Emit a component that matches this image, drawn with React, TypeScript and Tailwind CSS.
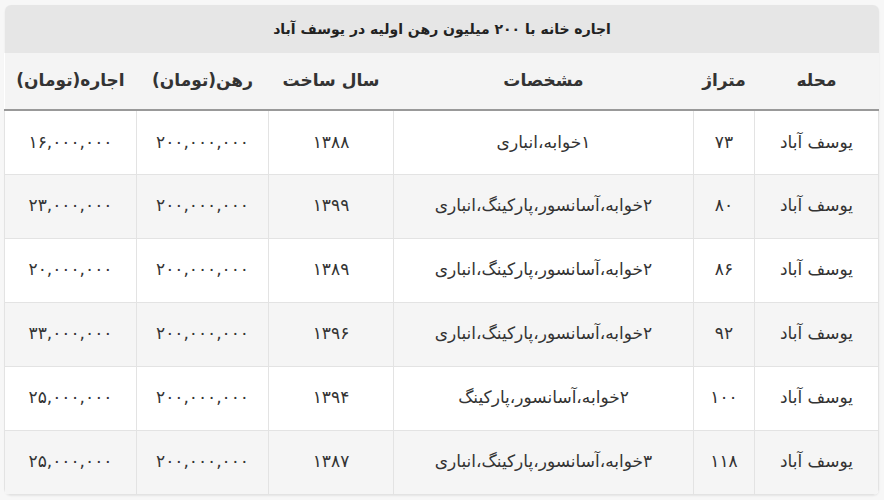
const rows = [
  ["یوسف آباد", "۷۳", "۱خوابه،انباری", "۱۳۸۸", "۲۰۰,۰۰۰,۰۰۰", "۱۶,۰۰۰,۰۰۰"],
  ["یوسف آباد", "۸۰", "۲خوابه،آسانسور،پارکینگ،انباری", "۱۳۹۹", "۲۰۰,۰۰۰,۰۰۰", "۲۳,۰۰۰,۰۰۰"],
  ["یوسف آباد", "۸۶", "۲خوابه،آسانسور،پارکینگ،انباری", "۱۳۸۹", "۲۰۰,۰۰۰,۰۰۰", "۲۰,۰۰۰,۰۰۰"],
  ["یوسف آباد", "۹۲", "۲خوابه،آسانسور،پارکینگ،انباری", "۱۳۹۶", "۲۰۰,۰۰۰,۰۰۰", "۳۳,۰۰۰,۰۰۰"],
  ["یوسف آباد", "۱۰۰", "۲خوابه،آسانسور،پارکینگ", "۱۳۹۴", "۲۰۰,۰۰۰,۰۰۰", "۲۵,۰۰۰,۰۰۰"],
  ["یوسف آباد", "۱۱۸", "۳خوابه،آسانسور،پارکینگ،انباری", "۱۳۸۷", "۲۰۰,۰۰۰,۰۰۰", "۲۵,۰۰۰,۰۰۰"],
];

const headers = ["محله", "متراژ", "مشخصات", "سال ساخت", "رهن(تومان)", "اجاره(تومان)"];
const widths = ["w-[124px]", "w-[61px]", "w-[300px]", "w-[125px]", "w-[132px]", "w-[132px]"];

export default function App() {
  return (
    <div
      dir="rtl"
      className="min-h-[500px] bg-[#f7f7f7] pt-[5px] pr-[5px] text-[#333]"
      style={{ fontFamily: '"DejaVu Sans", "Noto Sans", sans-serif' }}
    >
      <div className="w-[874px] rounded-md shadow-[0_1px_2px_rgba(0,0,0,0.08)]">
        <div className="flex h-[48px] items-center justify-center rounded-t-md bg-[#e6e6e6] text-[14px] font-bold text-[#222]">
          اجاره خانه با ۲۰۰ میلیون رهن اولیه در یوسف آباد
        </div>
        <table className="w-full table-fixed border-collapse overflow-hidden rounded-b-md bg-white">
          <colgroup>
            {widths.map((w, i) => (
              <col key={i} className={w} />
            ))}
          </colgroup>
          <thead>
            <tr className="h-[57px] border-b-2 border-[#999] bg-[#f4f4f4]">
              {headers.map((h) => (
                <th key={h} className="text-center text-[17px] font-bold text-[#333]">
                  {h}
                </th>
              ))}
            </tr>
          </thead>
          <tbody>
            {rows.map((r, i) => (
              <tr
                key={i}
                className={`h-[64px] border-b border-[#e3e3e3] ${i % 2 === 1 ? "bg-[#f5f5f5]" : "bg-white"}`}
              >
                {r.map((c, j) => (
                  <td key={j} className="border-x border-[#e3e3e3] text-center text-[17px] text-[#333]">
                    {c}
                  </td>
                ))}
              </tr>
            ))}
          </tbody>
        </table>
      </div>
    </div>
  );
}
